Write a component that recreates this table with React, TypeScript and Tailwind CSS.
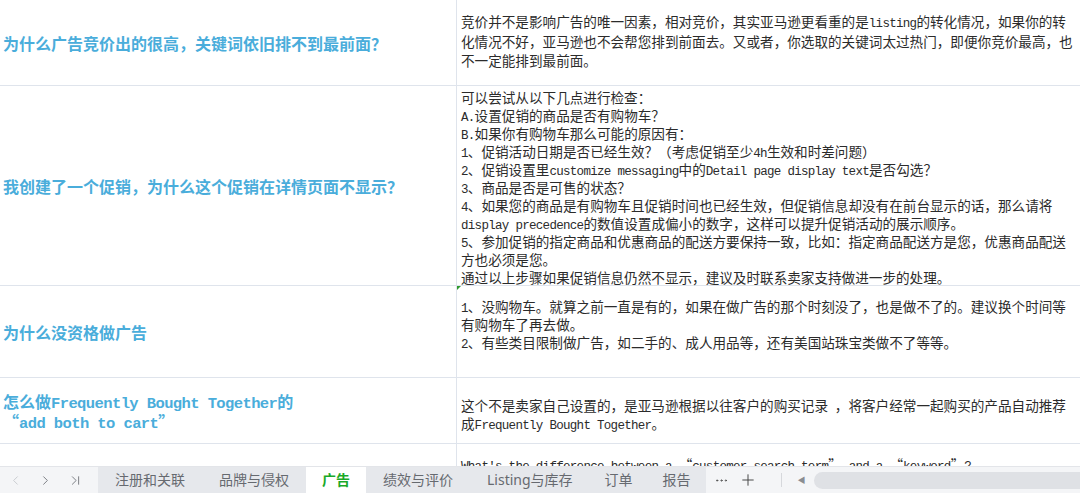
import { ChevronLeft, ChevronRight, ChevronLast, MoreHorizontal, Plus } from "lucide-react";

/** Splits a string into CJK runs and ASCII runs, ASCII gets the narrow mono face */
const Mixed = ({ text, mono }: { text: string; mono: string }) => {
  const parts = text.split(/([\x20-\x7e]+)/);
  return (
    <>
      {parts.map((p, i) =>
        /^[\x20-\x7e]+$/.test(p) ? (
          <span key={i} className={mono}>
            {p}
          </span>
        ) : (
          <span key={i}>{p}</span>
        )
      )}
    </>
  );
};

const ANSWER_MONO = "font-['Liberation_Mono',monospace] text-[12.5px] tracking-[-0.7px] leading-none";
const QUESTION_MONO = "font-['Liberation_Mono',monospace] text-[15.5px] tracking-[-0.6px] leading-none";

interface Row {
  question: string[];
  answer: string[];
  height: string;
  answerPad: string;
  lineH: string;
  mark?: boolean;
}

const rows: Row[] = [
  {
    question: ["为什么广告竞价出的很高，关键词依旧排不到最前面？"],
    answer: [
      "竞价并不是影响广告的唯一因素，相对竞价，其实亚马逊更看重的是listing的转化情况，如果你的转",
      "化情况不好，亚马逊也不会帮您排到前面去。又或者，你选取的关键词太过热门，即便你竞价最高，也",
      "不一定能排到最前面。",
    ],
    height: "h-[86px]",
    answerPad: "pt-[12px]",
    lineH: "h-[19.5px] leading-[19.5px]",
  },
  {
    question: ["我创建了一个促销，为什么这个促销在详情页面不显示？"],
    answer: [
      "可以尝试从以下几点进行检查：",
      "A.设置促销的商品是否有购物车？",
      "B.如果你有购物车那么可能的原因有：",
      "1、促销活动日期是否已经生效？（考虑促销至少4h生效和时差问题）",
      "2、促销设置里customize messaging中的Detail page display text是否勾选？",
      "3、商品是否是可售的状态？",
      "4、如果您的商品是有购物车且促销时间也已经生效，但促销信息却没有在前台显示的话，那么请将",
      "display precedence的数值设置成偏小的数字，这样可以提升促销活动的展示顺序。",
      "5、参加促销的指定商品和优惠商品的配送方要保持一致，比如：指定商品配送方是您，优惠商品配送",
      "方也必须是您。",
      "通过以上步骤如果促销信息仍然不显示，建议及时联系卖家支持做进一步的处理。",
    ],
    height: "h-[200px]",
    answerPad: "pt-[2px]",
    lineH: "h-[18px] leading-[18px]",
  },
  {
    question: ["为什么没资格做广告"],
    answer: [
      "1、没购物车。就算之前一直是有的，如果在做广告的那个时刻没了，也是做不了的。建议换个时间等",
      "有购物车了再去做。",
      "2、有些类目限制做广告，如二手的、成人用品等，还有美国站珠宝类做不了等等。",
    ],
    height: "h-[92px]",
    answerPad: "pt-[11px]",
    lineH: "h-[18px] leading-[18px]",
    mark: true,
  },
  {
    question: ["怎么做Frequently Bought Together的", "“add both to cart”"],
    answer: [
      "这个不是卖家自己设置的，是亚马逊根据以往客户的购买记录 ，将客户经常一起购买的产品自动推荐",
      "成Frequently Bought Together。",
    ],
    height: "h-[66px]",
    answerPad: "pt-[18px]",
    lineH: "h-[18px] leading-[18px]",
  },
];

const tabs = [
  { name: "注册和关联", pad: "px-[17px]" },
  { name: "品牌与侵权", pad: "px-[17px]" },
  { name: "广告", pad: "px-[16px]" },
  { name: "绩效与评价", pad: "px-[17px]" },
  { name: "Listing与库存", pad: "px-[17px]" },
  { name: "订单", pad: "px-[15px]" },
  { name: "报告", pad: "px-[15px]" },
];

export default function App() {
  return (
    <div className="w-[1080px] h-[493px] bg-white flex flex-col overflow-hidden font-['Noto_Sans_CJK_SC',sans-serif]">
      {/* Sheet */}
      <div className="flex-1 flex flex-col overflow-hidden">
        {rows.map((row, i) => (
          <div key={i} className={`flex ${row.height} border-b border-[#dfe4ec] shrink-0`}>
            <div className="w-[457px] shrink-0 border-r border-[#dfe4ec] flex flex-col justify-center pl-[3px] text-[16px] font-bold text-[#4aaddb]">
              {row.question.map((q, j) => (
                <div key={j} className="whitespace-nowrap h-[20px] leading-[20px]">
                  <Mixed text={q} mono={QUESTION_MONO} />
                </div>
              ))}
            </div>
            <div className={`relative flex-1 pl-[4px] ${row.answerPad} text-[13.6px] text-[#2b2b2b]`}>
              {row.mark && (
                <div className="absolute left-0 top-0 w-0 h-0 border-t-[4px] border-t-[#2f9a2f] border-r-[4px] border-r-transparent" />
              )}
              {row.answer.map((a, j) => (
                <div key={j} className={`whitespace-nowrap ${row.lineH}`}>
                  <Mixed text={a} mono={ANSWER_MONO} />
                </div>
              ))}
            </div>
          </div>
        ))}
        <div className="flex flex-1">
          <div className="w-[457px] shrink-0 border-r border-[#dfe4ec]" />
          <div className="flex-1 pl-[4px] pt-[11px] text-[13.6px] text-[#2b2b2b] whitespace-nowrap h-[18px] leading-[18px]">
            <Mixed
              text={"What's the difference between a “customer search term” and a “keyword”?"}
              mono={ANSWER_MONO}
            />
          </div>
        </div>
      </div>

      {/* Sheet tabs */}
      <div className="h-[27px] shrink-0 flex items-stretch bg-[#f4f5f7] border-t border-[#e3e5e9] font-['Noto_Sans','Noto_Sans_CJK_SC',sans-serif] text-[14px] leading-none text-[#666a70]">
        <div className="w-[98px] flex items-center pl-[8px] gap-[15px]">
          <ChevronLeft className="size-[15px] text-[#c4c7cc]" strokeWidth={1.4} />
          <ChevronRight className="size-[15px] text-[#6b6f75]" strokeWidth={1.4} />
          <ChevronLast className="size-[15px] text-[#6b6f75]" strokeWidth={1.4} />
        </div>
        <div className="flex items-stretch bg-[#e6e8ec]">
          {tabs.map((t) =>
            t.name === "广告" ? (
              <div key={t.name} className={`flex items-center ${t.pad} bg-white text-[#1aa928] font-bold`}>
                {t.name}
              </div>
            ) : (
              <div key={t.name} className={`flex items-center ${t.pad} whitespace-nowrap`}>
                {t.name}
              </div>
            )
          )}
        </div>
        <div className="flex items-center pl-[8px] gap-[10px]">
          <MoreHorizontal className="size-[15px] text-[#555]" strokeWidth={1.6} />
          <Plus className="size-[18px] text-[#444]" strokeWidth={1.3} />
          <div className="w-px h-[14px] bg-[#d6d8dc] ml-[14px]" />
          <span className="text-[8px] text-[#8a8d92] ml-[6px]">◀</span>
        </div>
        <div className="flex-1 flex items-center pl-[8px]">
          <div className="h-[17px] w-full rounded-l-full bg-[#dfe1e5]" />
        </div>
      </div>
    </div>
  );
}
